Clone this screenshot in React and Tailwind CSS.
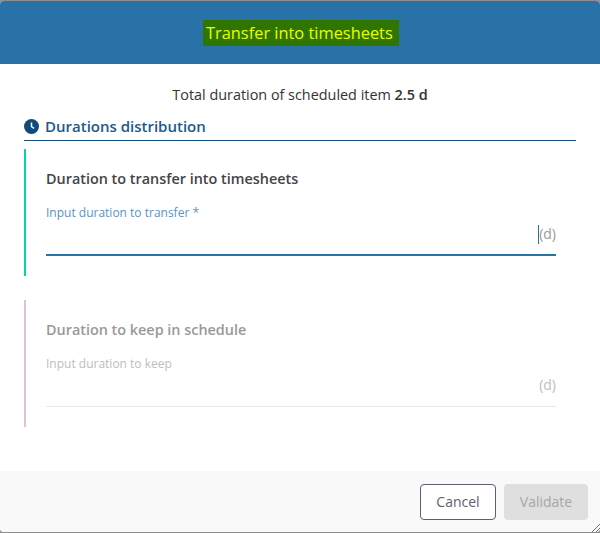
function ClockSolid() {
  return (
    <svg width="15" height="15" viewBox="0 0 15 15" className="shrink-0">
      <circle cx="7.5" cy="7.5" r="7.5" fill="#114a7c" />
      <path d="M7.5 3.5v4.2l2.6 1.6" fill="none" stroke="#fff" strokeWidth="1.5" />
    </svg>
  );
}

function DurationBlock({ accent, title, label, disabled, focused }) {
  return (
    <div className={`mx-6 h-[127px] border-l-2 pr-5 pl-5 ${accent}`}>
      <h3 className={`pt-[20px] text-[14.4px] leading-[19px] font-semibold ${disabled ? 'text-[#999999]' : 'text-[#444444]'}`}>
        {title}
      </h3>
      <label className={`mt-[17px] block text-[12px] leading-[16px] ${disabled ? 'text-[#bdbdbd]' : 'text-[#5a94bf]'}`}>
        {label}
      </label>
      <div className={`mt-[4px] flex h-[31px] items-start justify-end ${disabled ? 'border-b border-[#e8e8e8]' : 'border-b-2 border-[#2872a8]'}`}>
        {focused && <span className="h-[19px] w-px bg-[#2872a8]" />}
        <span className={`-mt-px text-[14px] leading-[19px] ${disabled ? 'text-[#bdbdbd]' : 'text-[#999999]'}`}>(d)</span>
      </div>
    </div>
  );
}

export default function App() {
  return (
    <div className="h-[533px] w-[600px] bg-[#8f8f8f] py-px font-['Open_Sans',sans-serif]">
      <div className="relative flex h-[531px] flex-col overflow-hidden rounded bg-white">
        {/* Header */}
        <div className="flex h-[63px] shrink-0 items-center justify-center bg-[#2872a8]">
          <h2 className="ml-[2px] bg-[#2f7500] pr-[2px] pl-[3px] text-[16.4px] leading-[26px] text-[#e9ff00]">
            Transfer into timesheets&nbsp;
          </h2>
        </div>

        {/* Body */}
        <div className="flex-1">
          <p className="mt-[21px] text-center text-[14.4px] leading-[19px] text-[#333333]">
            Total duration of scheduled item <b className="font-semibold">2.5 d</b>
          </p>
          <div className="mx-6 mt-[9px] flex h-[28px] items-center gap-[6px] border-b border-[#114a7c]">
            <ClockSolid />
            <span className="-mt-[2px] text-[15px] leading-[20px] font-semibold text-[#1d5a8c]">Durations distribution</span>
          </div>
          <div className="mt-2">
            <DurationBlock
              accent="border-[#00d9a6]"
              title="Duration to transfer into timesheets"
              label="Input duration to transfer *"
              focused
            />
          </div>
          <div className="mt-6">
            <DurationBlock
              accent="border-[#e8bcd9]"
              title="Duration to keep in schedule"
              label="Input duration to keep"
              disabled
            />
          </div>
        </div>

        {/* Footer */}
        <div className="flex h-[61px] shrink-0 items-start justify-end gap-2 bg-[#f9f9f9] pt-[13px] pr-3">
          <button className="h-9 w-[76px] rounded border border-[#5f5f6f] bg-white pb-px text-[14px] text-[#5f5f6f]">Cancel</button>
          <button disabled className="h-9 w-[84px] rounded bg-[#dfdfdf] pb-px text-[14px] text-[#a6a6a6]">Validate</button>
        </div>

        {/* Resize handle */}
        <svg width="8" height="8" viewBox="0 0 8 8" className="absolute right-0 bottom-0">
          <path d="M0 8L8 0M4 8L8 4" stroke="#777777" strokeWidth="1" fill="none" />
        </svg>
      </div>
    </div>
  );
}
